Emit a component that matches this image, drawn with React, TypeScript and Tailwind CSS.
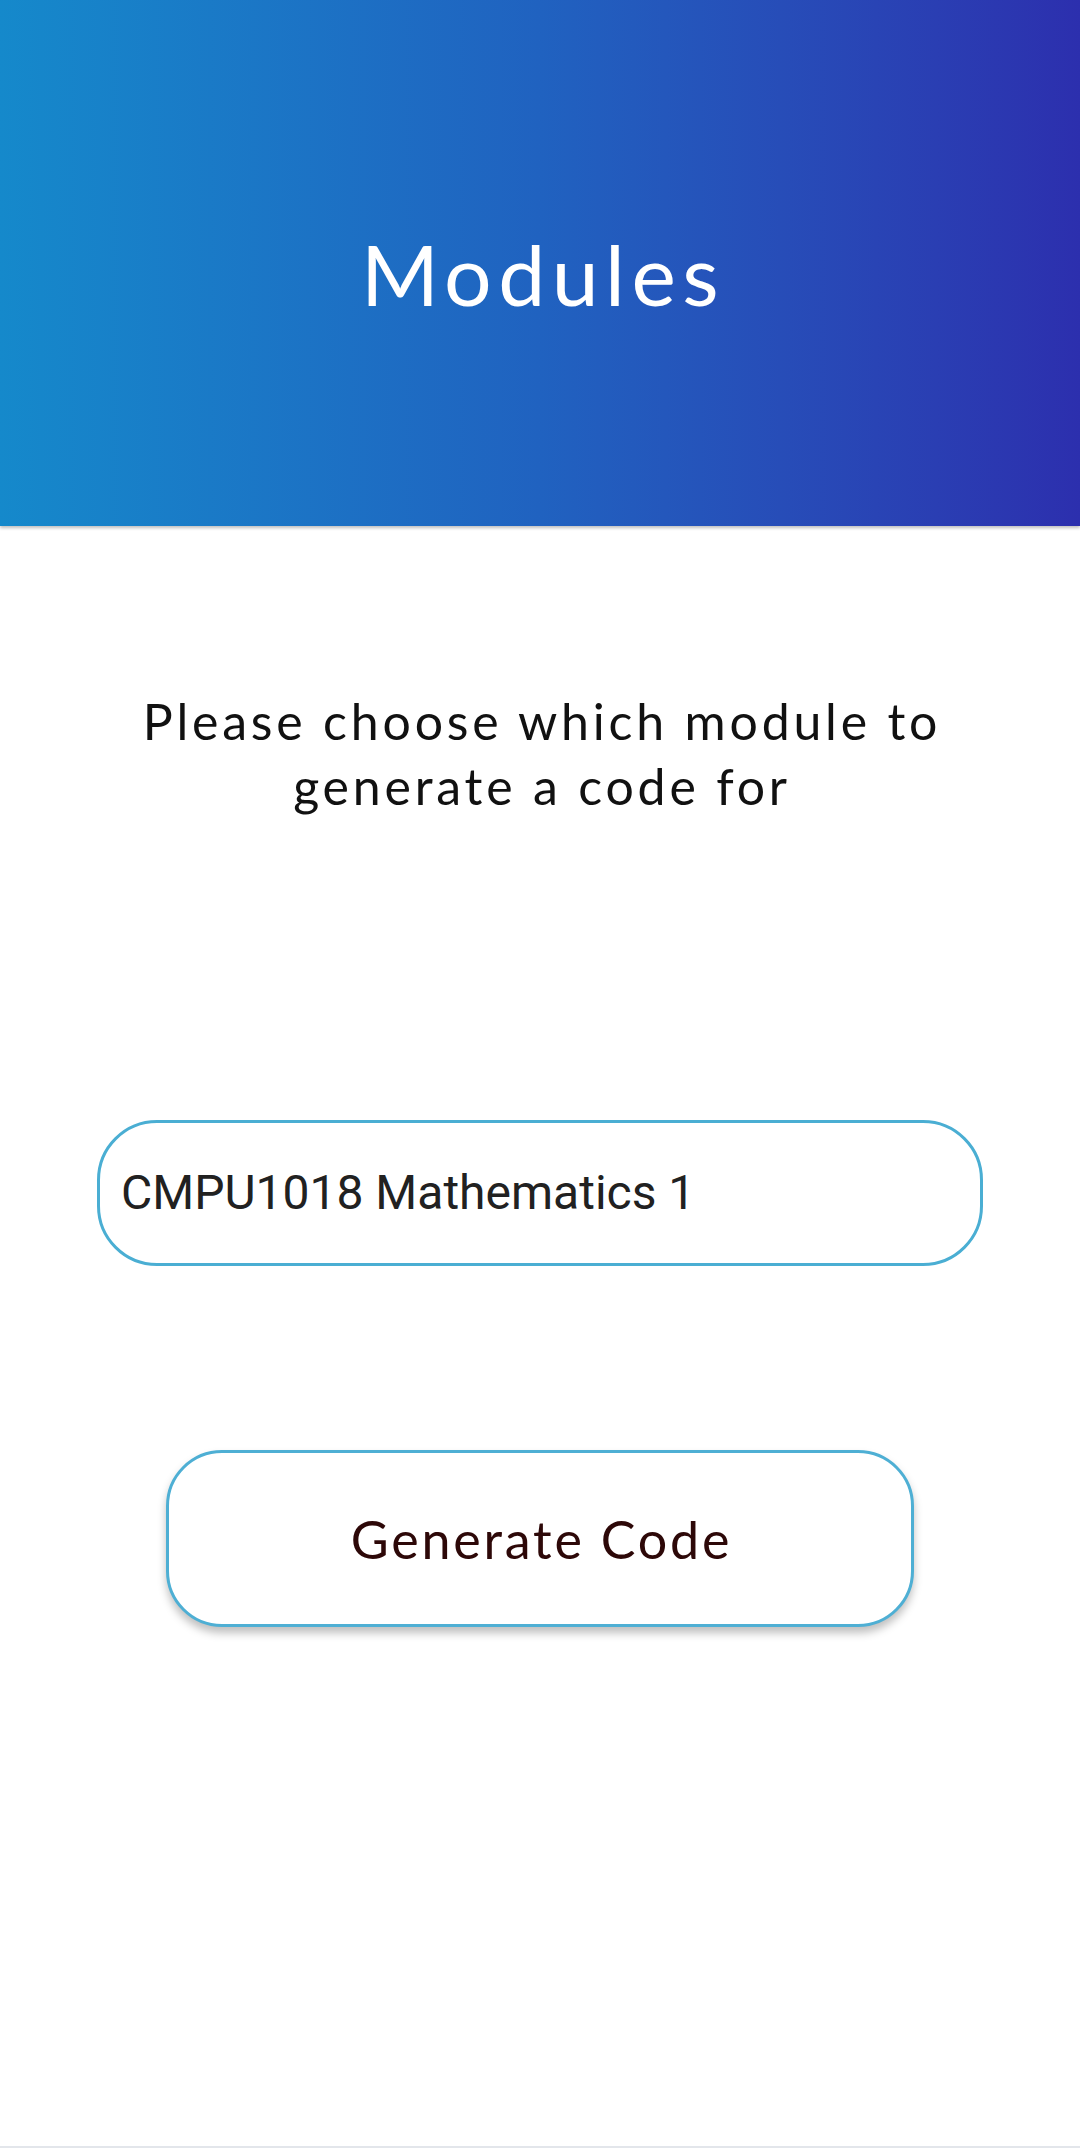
import React from "react";

export default function App() {
  return (
    <div className="w-[1080px] h-[2148px] bg-white flex flex-col overflow-hidden" style={{ fontFamily: "Lato, 'Open Sans', sans-serif" }}>
      <header className="h-[526px] w-full shrink-0 bg-gradient-to-r from-[#1589cb] via-[#2062c0] to-[#2c2fae] shadow-[0_2px_3px_rgba(0,0,0,0.25)] relative z-10">
        <h1 className="pt-[232px] pl-[6px] text-center text-white text-[84px] leading-none font-normal tracking-[6.5px]">
          Modules
        </h1>
      </header>
      <main className="flex flex-col items-center flex-1">
        <p className="mt-[163px] w-[1000px] pl-[4px] text-center text-[50px] leading-[65px] text-[#111] font-normal tracking-[3.8px]">
          Please choose which module to
          <br />
          generate a code for
        </p>
        <div className="mt-[301px] w-[886px] h-[146px] shrink-0 rounded-[60px] border-[3px] border-[#4aaed3] flex items-center pl-[21px]">
          <span className="text-[48px] text-[#212121]" style={{ fontFamily: "Roboto, sans-serif" }}>
            CMPU1018 Mathematics 1
          </span>
        </div>
        <button className="mt-[184px] w-[748px] h-[177px] shrink-0 rounded-[56px] border-[3px] border-[#4eafd4] bg-white shadow-[0_6px_8px_rgba(0,0,0,0.25)] flex items-center justify-center pl-[3px]">
          <span className="text-[52px] text-[#2d0808] font-normal tracking-[2.8px]">Generate Code</span>
        </button>
        <div className="mt-auto w-full h-[2px] bg-[#e3e6eb]" />
      </main>
    </div>
  );
}
